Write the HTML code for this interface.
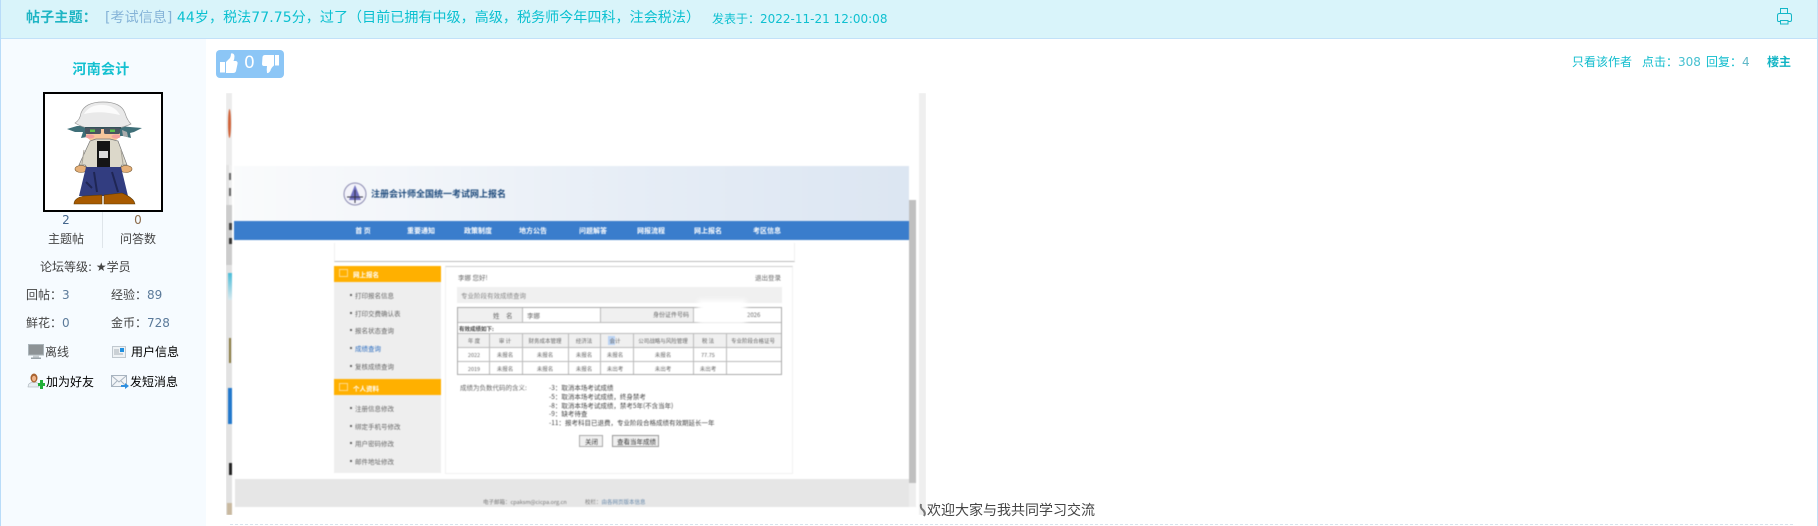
<!DOCTYPE html>
<html lang="zh"><head><meta charset="utf-8"><title>帖子</title>
<style>
html,body{margin:0;padding:0;background:#fff}
body{position:relative;width:1818px;height:526px;overflow:hidden;font-family:"DejaVu Sans","WenQuanYi Zen Hei","Noto Sans CJK SC",sans-serif;font-size:12px;color:#444}
.a,.t{position:absolute}
.t{white-space:nowrap;line-height:16px}
.c{color:#0fc0d0}
.s{color:#444}.v{color:#5b7a9a}
.ib{color:#000}
#img{position:absolute;left:226px;top:93px;width:700px;height:422px;background:#fff;overflow:hidden}
#img .x{position:absolute}
#blur{position:absolute;left:0;top:0;width:700px;height:422px;filter:blur(.55px)}
#blur .p{position:absolute;white-space:nowrap;font-size:6.5px;line-height:10px;color:#666;font-family:"WenQuanYi Zen Hei","Noto Sans CJK SC",sans-serif}
#blur .n{color:#fff;font-weight:bold;font-size:7px;transform:translateX(-50%)}
#blur .b{color:#fff;font-weight:bold}
#blur .cc{transform:translateX(-50%);font-size:5.5px}
</style></head><body>
<!-- header -->
<div class="a" style="left:0;top:0;width:1818px;height:38px;background:#d9f4fa"></div>
<div class="a" style="left:0;top:38px;width:1818px;height:1px;background:#c2e1f8"></div>
<!-- sidebar -->
<div class="a" style="left:1px;top:39px;width:205px;height:487px;background:#f6fbff"></div>
<div class="a" style="left:0;top:0;width:1px;height:526px;background:#b9dcf9"></div>
<div class="a" style="left:1817px;top:0;width:1px;height:526px;background:#c2e1f8"></div>

<div class="t" style="left:26px;top:10px;font-size:14px;font-weight:bold;color:#1fb5c4;letter-spacing:.2px">帖子主题：</div>
<div class="t" style="left:105px;top:10px;font-size:14px;color:#0bc0d0;letter-spacing:.08px"><span style="color:#86b4d8">[考试信息]</span> 44岁，税法77.75分，过了（目前已拥有中级，高级，税务师今年四科，注会税法）</div>
<div class="t c" style="left:712px;top:11px">发表于：2022-11-21 12:00:08</div>
<svg class="a" style="left:1776px;top:7px" width="18" height="19" viewBox="0 0 18 19" fill="none" stroke="#12b7c7" stroke-width="1"><path d="M4.5 7V1.5h7V7"/><path d="M4 14.5H2.5Q1.5 14.5 1.5 13V8.5Q1.5 6.5 3.5 6.5H13.5Q15.500 6.500 15.500 8.500V13Q15.500 14.500 14 14.500H12.500"/><path d="M4.500 13.500h7.500v3.500H4.500z"/></svg>

<div class="t" style="left:61px;top:62px;width:80px;text-align:center;font-size:14px;font-weight:bold;color:#14c0d0;letter-spacing:.3px">河南会计</div>

<!-- avatar -->
<svg class="a" style="left:43px;top:92px" width="120" height="120" viewBox="43 92 120 120">
<rect x="44" y="93" width="118" height="118" fill="#fff" stroke="#000" stroke-width="2"/>
<path d="M67 129l10-3 30-1 35 3-8 4-4 1 1 5-8-2-30 0-12 2 2-6-8 0z" fill="#3f6f78"/>
<path d="M75 123Q80 120 81 113Q85 102 103 102Q121 102 125 113Q127 120 131 124Q118 130 103 129Q86 130 75 123z" fill="#e9e9e9" stroke="#9a9a9a" stroke-width=".7"/>
<path d="M84 114Q90 104 104 105Q115 106 120 115Q100 110 84 114z" fill="#fbfbfb"/>
<path d="M86 127h34v8q-3 8-17 8q-14 0-17-8z" fill="#f6c79c"/>
<rect x="85" y="127" width="36" height="2" fill="#35525a"/>
<rect x="85" y="128" width="16" height="6" rx="1.500" fill="#4a5560"/><rect x="104" y="128" width="16" height="6" rx="1.500" fill="#4a5560"/>
<rect x="90" y="129.500" width="5" height="2.500" fill="#5dc04a"/><rect x="110" y="129.500" width="5" height="2.500" fill="#5dc04a"/>
<ellipse cx="90" cy="136.500" rx="4.500" ry="2" fill="#f3a0a0"/><ellipse cx="116" cy="136.500" rx="4.500" ry="2" fill="#f3a0a0"/>
<path d="M122 130l5 2 1 5-5-1z" fill="#aaa"/>
<path d="M90 141L79 165H85L89 170H119L122 165H127L118 141L110 139H96z" fill="#dcd8ca" stroke="#777" stroke-width=".7"/>
<path d="M84 150l-2 14M121 150l2 14" stroke="#aaa59a" fill="none"/>
<rect x="97" y="141" width="13" height="26" fill="#151515"/>
<rect x="99" y="151" width="9" height="7" fill="#ddd"/>
<ellipse cx="81" cy="169" rx="6" ry="3.500" fill="#e6b078" stroke="#7a5a30" stroke-width=".6"/><ellipse cx="126" cy="169" rx="6" ry="3.500" fill="#e6b078" stroke="#7a5a30" stroke-width=".6"/>
<path d="M86 167H121L128 196H79z" fill="#323d80"/>
<path d="M94 172l3 20M112 172l6 20M86 182l6 6" stroke="#1f2654" stroke-width="2" fill="none"/>
<path d="M74 204Q74 198 84 196L102 195V204zM104 195L122 193Q134 198 135 204H104z" fill="#a85a00" stroke="#5b3a05" stroke-width=".6"/>
</svg>

<div class="a" style="left:102px;top:212px;width:1px;height:36px;background:#dfe5ea"></div>
<div class="t" style="left:36px;top:212px;width:60px;text-align:center;color:#43658c">2</div>
<div class="t" style="left:108px;top:212px;width:60px;text-align:center;color:#8a6a4a">0</div>
<div class="t s" style="left:36px;top:231px;width:60px;text-align:center">主题帖</div>
<div class="t s" style="left:108px;top:231px;width:60px;text-align:center">问答数</div>
<div class="t s" style="left:40px;top:259px">论坛等级: ★学员</div>
<div class="t s" style="left:26px;top:287px">回帖：<span class="v">3</span></div>
<div class="t s" style="left:111px;top:287px">经验：<span class="v">89</span></div>
<div class="t s" style="left:26px;top:315px">鲜花：<span class="v">0</span></div>
<div class="t s" style="left:111px;top:315px">金币：<span class="v">728</span></div>

<!-- status icons -->
<svg class="a" style="left:28px;top:344px" width="17" height="16" viewBox="0 0 17 16"><rect x=".5" y=".5" width="15" height="10.500" fill="#8d9396" stroke="#aab4ba"/><rect x="5" y="11" width="6" height="3" fill="#c5ccd0"/><rect x="3" y="13.500" width="10" height="1.500" fill="#9aa4aa"/></svg>
<div class="t s" style="left:45px;top:344px">离线</div>
<svg class="a" style="left:112px;top:346px" width="15" height="13" viewBox="0 0 15 13"><rect x=".5" y=".5" width="13" height="11" fill="#eef2f5" stroke="#c0c8cf"/><rect x="8" y="2" width="4" height="4" fill="#2090e0"/><path d="M2 4h5M2 6h5M2 8h9" stroke="#a8b0b8"/></svg>
<div class="t ib" style="left:131px;top:344px">用户信息</div>
<svg class="a" style="left:27px;top:373px" width="18" height="16" viewBox="0 0 18 16"><path d="M1 14Q1 10 5 9.500h4Q12 10 12 14z" fill="#e8eef2" stroke="#a0a8b0" stroke-width=".6"/><ellipse cx="7" cy="5" rx="3.500" ry="4.500" fill="#a8622f"/><ellipse cx="7" cy="5.500" rx="2" ry="2.800" fill="#eeb48a"/><path d="M13 7h3v3h2v3h-2v3h-3v-3h-2v-3h2z" fill="#22b03a"/></svg>
<div class="t ib" style="left:46px;top:374px">加为好友</div>
<svg class="a" style="left:111px;top:375px" width="18" height="14" viewBox="0 0 18 14"><rect x=".5" y=".5" width="15" height="11" fill="#f2f5f8" stroke="#a8b4c0"/><path d="M1 1l7 6 7-6M1 11l5-5M15 11l-5-5" fill="none" stroke="#a8b4c0"/><path d="M10 10h4V8l4 3-4 3v-2h-4z" fill="#2e8fe0"/></svg>
<div class="t ib" style="left:130px;top:374px">发短消息</div>

<!-- thumbs -->
<div class="a" style="left:216px;top:50px;width:68px;height:28px;border-radius:4px;background:#8cc6f6"></div>
<svg class="a" style="left:216px;top:50px" width="68" height="28" viewBox="0 0 68 28" fill="#fff"><rect x="4" y="12" width="5" height="10.500"/><path d="M10 12L14 8Q15 6 15 3.500Q18 3 18.500 6Q18.500 9 17.500 11H20Q22 11.500 21.500 14L20 21Q19.500 23 17 23H10z"/><rect x="59" y="5" width="4" height="10.500"/><path d="M58 5H49Q47 5 46.500 7L46 14Q46 16 48 16H51Q50.500 19 51 23Q53 23.500 54.500 20.500Q55 18 58 15.500z"/></svg>
<div class="t" style="left:244px;top:52px;font-size:17px;line-height:22px;color:#fff">0</div>

<!-- right links -->
<div class="t" style="left:1572px;top:54px;color:#0fbccd">只看该作者</div>
<div class="t" style="left:1642px;top:54px;color:#0fbccd">点击：<span style="color:#45c0d0">308</span></div>
<div class="t" style="left:1706px;top:54px;color:#0fbccd">回复：<span style="color:#60b8c8">4</span></div>
<div class="t" style="left:1767px;top:54px;color:#12b4c4;font-weight:bold">楼主</div>

<!-- screenshot image -->
<div id="img">
<div id="blur">
 <!-- left strip -->
 <div class="x" style="left:0;top:0;width:6px;height:422px;background:#e2e2e2"></div>
 <div class="x" style="left:0;top:0;width:6px;height:72px;background:#ececec"></div>
 <div class="x" style="left:2px;top:16px;width:3px;height:29px;border-radius:50%;background:#d0643a"></div>
 <div class="x" style="left:3px;top:72px;width:3px;height:40px;background:#eee"></div>
 <div class="x" style="left:3px;top:80px;width:2px;height:7px;background:#666"></div>
 <div class="x" style="left:3px;top:95px;width:2px;height:8px;background:#666"></div>
 <div class="x" style="left:0;top:112px;width:6px;height:60px;background:#cccccc"></div>
 <div class="x" style="left:3px;top:130px;width:3px;height:7px;background:#444"></div>
 <div class="x" style="left:3px;top:145px;width:3px;height:6px;background:#333"></div>
 <div class="x" style="left:2px;top:180px;width:4px;height:27px;background:linear-gradient(#49bcd8,#d8e8ee)"></div>
 <div class="x" style="left:3px;top:245px;width:2px;height:25px;background:#8a7a40"></div>
 <div class="x" style="left:2px;top:295px;width:4px;height:36px;background:#2278cc"></div>
 <div class="x" style="left:3px;top:370px;width:3px;height:12px;background:#222"></div>
 <div class="x" style="left:1px;top:410px;width:5px;height:12px;background:#c9b9a0"></div>
 <!-- right strip -->
 <div class="x" style="left:693px;top:0;width:7px;height:422px;background:#efefef"></div>
 <!-- top header band -->
 <div class="x" style="left:8px;top:73px;width:675px;height:55px;background:linear-gradient(90deg,#fafbfc,#f3f6fa 25%,#e6edf6 60%,#dce6f2)"></div>
 <div class="x" style="left:8px;top:128px;width:675px;height:19px;background:#3a7dcc"></div>
 <svg class="x" style="left:116px;top:89px" width="26" height="26" viewBox="0 0 26 26"><circle cx="13" cy="12" r="11" fill="#f3f3fa" stroke="#8a8ab0"/><path d="M13 3L7 18h12z" fill="#7070c0"/><path d="M5 15h16M13 8v13" stroke="#334" fill="none"/></svg>
 <div class="p" style="left:145px;top:96px;font-size:9px;font-weight:bold;color:#1d4a7c">注册会计师全国统一考试网上报名</div>
 <div class="p n" style="left:137px;top:133px">首 页</div>
 <div class="p n" style="left:195px;top:133px">重要通知</div>
 <div class="p n" style="left:252px;top:133px">政策制度</div>
 <div class="p n" style="left:307px;top:133px">地方公告</div>
 <div class="p n" style="left:367px;top:133px">问题解答</div>
 <div class="p n" style="left:425px;top:133px">网报流程</div>
 <div class="p n" style="left:482px;top:133px">网上报名</div>
 <div class="p n" style="left:541px;top:133px">考区信息</div>
 <!-- scrollbar -->
 <div class="x" style="left:683px;top:107px;width:7px;height:283px;background:#c0c0c0"></div>
 <div class="x" style="left:683px;top:390px;width:7px;height:24px;background:#eeeeee"></div>
 <!-- white nav box -->
 <div class="x" style="left:108px;top:150px;width:459px;height:18px;border:1px solid #f0f0f0;border-bottom:1px solid #bdbdbd;border-top:0;background:#fff"></div>
 <!-- left menu -->
 <div class="x" style="left:108px;top:173px;width:107px;height:207px;background:#eeeeee"></div>
 <div class="x" style="left:108px;top:173px;width:107px;height:16px;background:#ffb000"></div>
 <div class="x" style="left:108px;top:286px;width:107px;height:16px;background:#ffb000"></div>
 <div class="x" style="left:113px;top:176px;width:7px;height:6px;border:1px solid #ffd98a"></div>
 <div class="x" style="left:113px;top:290px;width:7px;height:6px;border:1px solid #ffd98a"></div>
 <div class="p b" style="left:127px;top:176px">网上报名</div>
 <div class="p b" style="left:127px;top:290px">个人资料</div>
 <div class="p" style="left:129px;top:197px">打印报名信息</div>
 <div class="p" style="left:129px;top:215px">打印交费确认表</div>
 <div class="p" style="left:129px;top:232px">报名状态查询</div>
 <div class="p" style="left:129px;top:250px;color:#2a6cc0">成绩查询</div>
 <div class="p" style="left:129px;top:268px">复核成绩查询</div>
 <div class="p" style="left:129px;top:310px">注册信息修改</div>
 <div class="p" style="left:129px;top:328px">绑定手机号修改</div>
 <div class="p" style="left:129px;top:345px">用户密码修改</div>
 <div class="p" style="left:129px;top:363px">邮件地址修改</div>
 <div class="x" style="left:124px;top:201px;width:2px;height:2px;background:#666;box-shadow:0 18px #666,0 35px #666,0 53px #666,0 71px #666,0 113px #666,0 131px #666,0 148px #666,0 166px #666"></div>
 <!-- main box -->
 <div class="x" style="left:219px;top:173px;width:348px;height:208px;border:1px solid #f1f1f1;border-top:1px solid #cfcfcf;box-sizing:border-box;background:#fff"></div>
 <div class="p" style="left:232px;top:179px">李娜 您好!</div>
 <div class="p" style="left:529px;top:179px">退出登录</div>
 <div class="x" style="left:231px;top:194px;width:325px;height:16px;background:#f0f0f0"></div>
 <div class="p" style="left:235px;top:197px;color:#888">专业阶段有效成绩查询</div>
 <!-- table -->
 <div class="x" style="left:231px;top:214px;width:325px;height:68px;border:1px solid #aaa;box-sizing:border-box;background:#fff"></div>
 <div class="x" style="left:232px;top:215px;width:64px;height:14px;background:#f0f0f0"></div>
 <div class="x" style="left:374px;top:215px;width:93px;height:14px;background:#f0f0f0"></div>
 <div class="x" style="left:232px;top:240px;width:323px;height:14px;background:#f0f0f0"></div>
 <div class="x" style="left:232px;top:229px;width:323px;height:1px;background:#bbb"></div>
 <div class="x" style="left:232px;top:240px;width:323px;height:1px;background:#bbb"></div>
 <div class="x" style="left:232px;top:254px;width:323px;height:1px;background:#bbb"></div>
 <div class="x" style="left:232px;top:268px;width:323px;height:1px;background:#bbb"></div>
 <div class="x" style="left:296px;top:215px;width:1px;height:14px;background:#bbb"></div>
 <div class="x" style="left:374px;top:215px;width:1px;height:14px;background:#bbb"></div>
 <div class="x" style="left:467px;top:215px;width:1px;height:14px;background:#bbb"></div>
 <div class="x" style="left:263px;top:240px;width:1px;height:41px;background:#bbb"></div>
 <div class="x" style="left:296px;top:240px;width:1px;height:41px;background:#bbb"></div>
 <div class="x" style="left:342px;top:240px;width:1px;height:41px;background:#bbb"></div>
 <div class="x" style="left:374px;top:240px;width:1px;height:41px;background:#bbb"></div>
 <div class="x" style="left:407px;top:240px;width:1px;height:41px;background:#bbb"></div>
 <div class="x" style="left:467px;top:240px;width:1px;height:41px;background:#bbb"></div>
 <div class="x" style="left:500px;top:240px;width:1px;height:41px;background:#bbb"></div>
 <div class="p" style="left:267px;top:217px">姓　名</div>
 <div class="p" style="left:301px;top:217px">李娜</div>
 <div class="p" style="left:427px;top:217px;font-size:6px">身份证件号码</div>
 <div class="p" style="left:521px;top:217px;font-size:6px">2026</div>
 <div class="p" style="left:233px;top:231px;color:#444;font-weight:bold;font-size:5.5px">有效成绩如下:</div>
 <div class="p cc" style="left:248px;top:243px">年 度</div>
 <div class="p cc" style="left:279px;top:243px">审 计</div>
 <div class="p cc" style="left:319px;top:243px">财务成本管理</div>
 <div class="p cc" style="left:358px;top:243px">经济法</div>
 <div class="x" style="left:382px;top:243px;width:7px;height:9px;background:#bcd4f4"></div>
 <div class="p cc" style="left:389px;top:243px">会计</div>
 <div class="p cc" style="left:437px;top:243px">公司战略与风险管理</div>
 <div class="p cc" style="left:482px;top:243px">税 法</div>
 <div class="p cc" style="left:527px;top:243px">专业阶段合格证号</div>
 <div class="p cc" style="left:248px;top:257px">2022</div>
 <div class="p cc" style="left:279px;top:257px">未报名</div>
 <div class="p cc" style="left:319px;top:257px">未报名</div>
 <div class="p cc" style="left:358px;top:257px">未报名</div>
 <div class="p cc" style="left:389px;top:257px">未报名</div>
 <div class="p cc" style="left:437px;top:257px">未报名</div>
 <div class="p cc" style="left:482px;top:257px">77.75</div>
 <div class="p cc" style="left:248px;top:271px">2019</div>
 <div class="p cc" style="left:279px;top:271px">未报名</div>
 <div class="p cc" style="left:319px;top:271px">未报名</div>
 <div class="p cc" style="left:358px;top:271px">未报名</div>
 <div class="p cc" style="left:389px;top:271px">未出考</div>
 <div class="p cc" style="left:437px;top:271px">未出考</div>
 <div class="p cc" style="left:482px;top:271px">未出考</div>
 <!-- legend -->
 <div class="p" style="left:234px;top:289px">成绩为负数代码的含义:</div>
 <div class="p" style="left:323px;top:289px;color:#444">-3：取消本场考试成绩</div>
 <div class="p" style="left:323px;top:298px;color:#444">-5：取消本场考试成绩，终身禁考</div>
 <div class="p" style="left:323px;top:307px;color:#444">-8：取消本场考试成绩，禁考5年(不含当年)</div>
 <div class="p" style="left:323px;top:315px;color:#444">-9：缺考待查</div>
 <div class="p" style="left:323px;top:324px;color:#444">-11：报考科目已退费，专业阶段合格成绩有效期延长一年</div>
 <div class="x" style="left:353px;top:342px;width:24px;height:12px;border:1px solid #aaa;box-sizing:border-box;background:#f0f0f0"></div>
 <div class="x" style="left:386px;top:342px;width:47px;height:12px;border:1px solid #999;box-sizing:border-box;background:#f0f0f0"></div>
 <div class="p" style="left:359px;top:343px;color:#333">关闭</div>
 <div class="p" style="left:391px;top:343px;color:#333">查看当年成绩</div>
 <!-- footer -->
 <div class="x" style="left:9px;top:386px;width:674px;height:28px;background:#e6e6e6"></div>
 <div class="p" style="left:257px;top:404px;font-size:5.5px;color:#777">电子邮箱：cpaksm@cicpa.org.cn</div>
 <div class="p" style="left:359px;top:404px;font-size:5.5px;color:#777">校栏：<span style="color:#6688aa">由各网页版本信息</span></div>
</div>
<!-- blur patch -->
<div class="x" style="left:472px;top:207px;width:48px;height:24px;background:#fff;filter:blur(3px)"></div>
</div>

<svg class="a" style="left:918px;top:503px" width="9" height="14" viewBox="0 0 9 14" fill="none" stroke="#777" stroke-width="2"><path d="M3 1Q2 5 5 7Q8 10 6 13"/></svg>
<div class="t" style="left:927px;top:502px;font-size:14px;line-height:18px;color:#444">欢迎大家与我共同学习交流</div>
<div class="a" style="left:230px;top:524px;width:1563px;height:0;border-top:1px dashed #d8e3ec"></div>
</body></html>
